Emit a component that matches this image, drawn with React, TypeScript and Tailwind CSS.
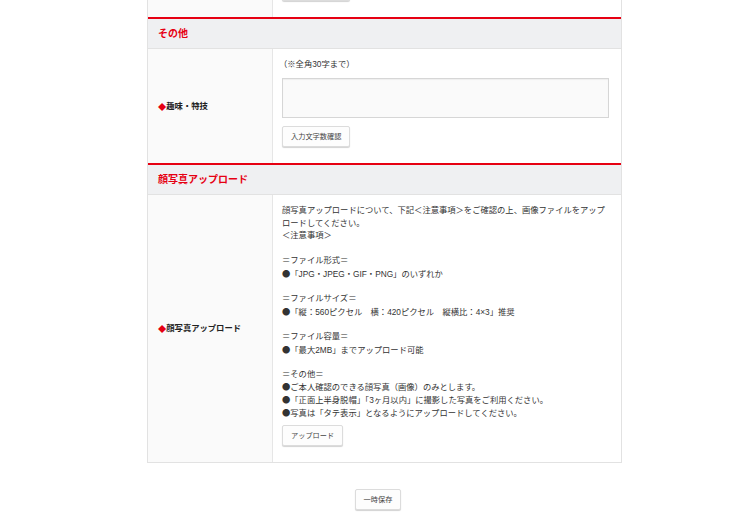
import React from 'react';

const font = "font-['Liberation_Sans','Noto_Sans_CJK_JP',sans-serif]";

const Btn: React.FC<{ label?: string; className?: string }> = ({ label, className = '' }) => (
  <button
    className={`h-[21px] px-[8px] text-[7.2px] text-[#444] bg-[#fdfdfd] border border-[#dcdcdc] rounded-[2px] shadow-[0_1px_1px_rgba(0,0,0,0.18)] leading-none whitespace-nowrap ${className}`}
  >
    {label}
  </button>
);

const SectionHead: React.FC<{ title: string }> = ({ title }) => (
  <div className="border-t-2 border-[#e60012]">
    <div className="h-[30px] flex items-center pl-[10px] bg-[#eff0f2] border-b border-[#e2e2e2] text-[10px] font-bold text-[#e60012]">
      {title}
    </div>
  </div>
);

const Row: React.FC<{ label?: string; children: React.ReactNode }> = ({ label, children }) => (
  <div className="flex">
    <div className="w-[125px] shrink-0 flex items-center pl-[10px] bg-[#fafafa] border-r border-[#e6e6e6] text-[8.3px] font-bold text-[#222]">
      {label && (
        <>
          <span className="text-[#e60012] font-['Noto_Sans_CJK_JP',sans-serif]">◆</span>
          {label}
        </>
      )}
    </div>
    <div className="flex-1 pl-[9px] pr-[12px] pt-[9px] pb-[16px] bg-white">{children}</div>
  </div>
);

const notes = [
  '顔写真アップロードについて、下記＜注意事項＞をご確認の上、画像ファイルをアップ',
  'ロードしてください。',
  '＜注意事項＞',
  '',
  '＝ファイル形式＝',
  '●「JPG・JPEG・GIF・PNG」のいずれか',
  '',
  '＝ファイルサイズ＝',
  '●「縦：560ピクセル　横：420ピクセル　縦横比：4×3」推奨',
  '',
  '＝ファイル容量＝',
  '●「最大2MB」までアップロード可能',
  '',
  '＝その他＝',
  '●ご本人確認のできる顔写真（画像）のみとします。',
  '●「正面上半身脱帽」「3ヶ月以内」に撮影した写真をご利用ください。',
  '●写真は「タテ表示」となるようにアップロードしてください。',
];

const NoteLine: React.FC<{ text: string }> = ({ text }) => {
  const bullet = text.startsWith('●');
  return (
    <div className="h-[12.6px] whitespace-nowrap">
      {bullet && <span className="font-['Noto_Sans_CJK_JP',sans-serif]">●</span>}
      {bullet ? text.slice(1) : text}
    </div>
  );
};

export default function App() {
  return (
    <div className={`${font} bg-white w-[750px] h-[522px] overflow-hidden`}>
      <div className="-mt-[20px] ml-[147px] w-[475px] border-x border-b border-[#e2e2e2]">
        {/* tail of the previous row */}
        <div className="flex">
          <div className="w-[125px] shrink-0 bg-[#fafafa] border-r border-[#e6e6e6]" />
          <div className="flex-1 flex pl-[9px] pb-[16px]">
            <Btn className="w-[68px]" />
          </div>
        </div>

        <SectionHead title="その他" />
        <Row label="趣味・特技">
          <div className="text-[8.3px] leading-[13px] text-[#333] -ml-[3px]">（※全角30字まで）</div>
          <textarea className="mt-[7px] block w-[327px] h-[40px] bg-[#fafafa] border border-[#d6d6d6] shadow-[inset_0_1px_1px_rgba(0,0,0,0.05)] resize-none outline-none" />
          <div className="mt-[8px] flex">
            <Btn label="入力文字数確認" />
          </div>
        </Row>

        <SectionHead title="顔写真アップロード" />
        <Row label="顔写真アップロード">
          <div className="text-[8.3px] leading-[12.6px] text-[#333]">
            {notes.map((line, i) => (
              <NoteLine key={i} text={line} />
            ))}
          </div>
          <div className="mt-[7px] flex">
            <Btn label="アップロード" />
          </div>
        </Row>
      </div>

      <div className="mt-[26px] flex justify-center pl-[6px]">
        <Btn label="一時保存" />
      </div>
    </div>
  );
}
